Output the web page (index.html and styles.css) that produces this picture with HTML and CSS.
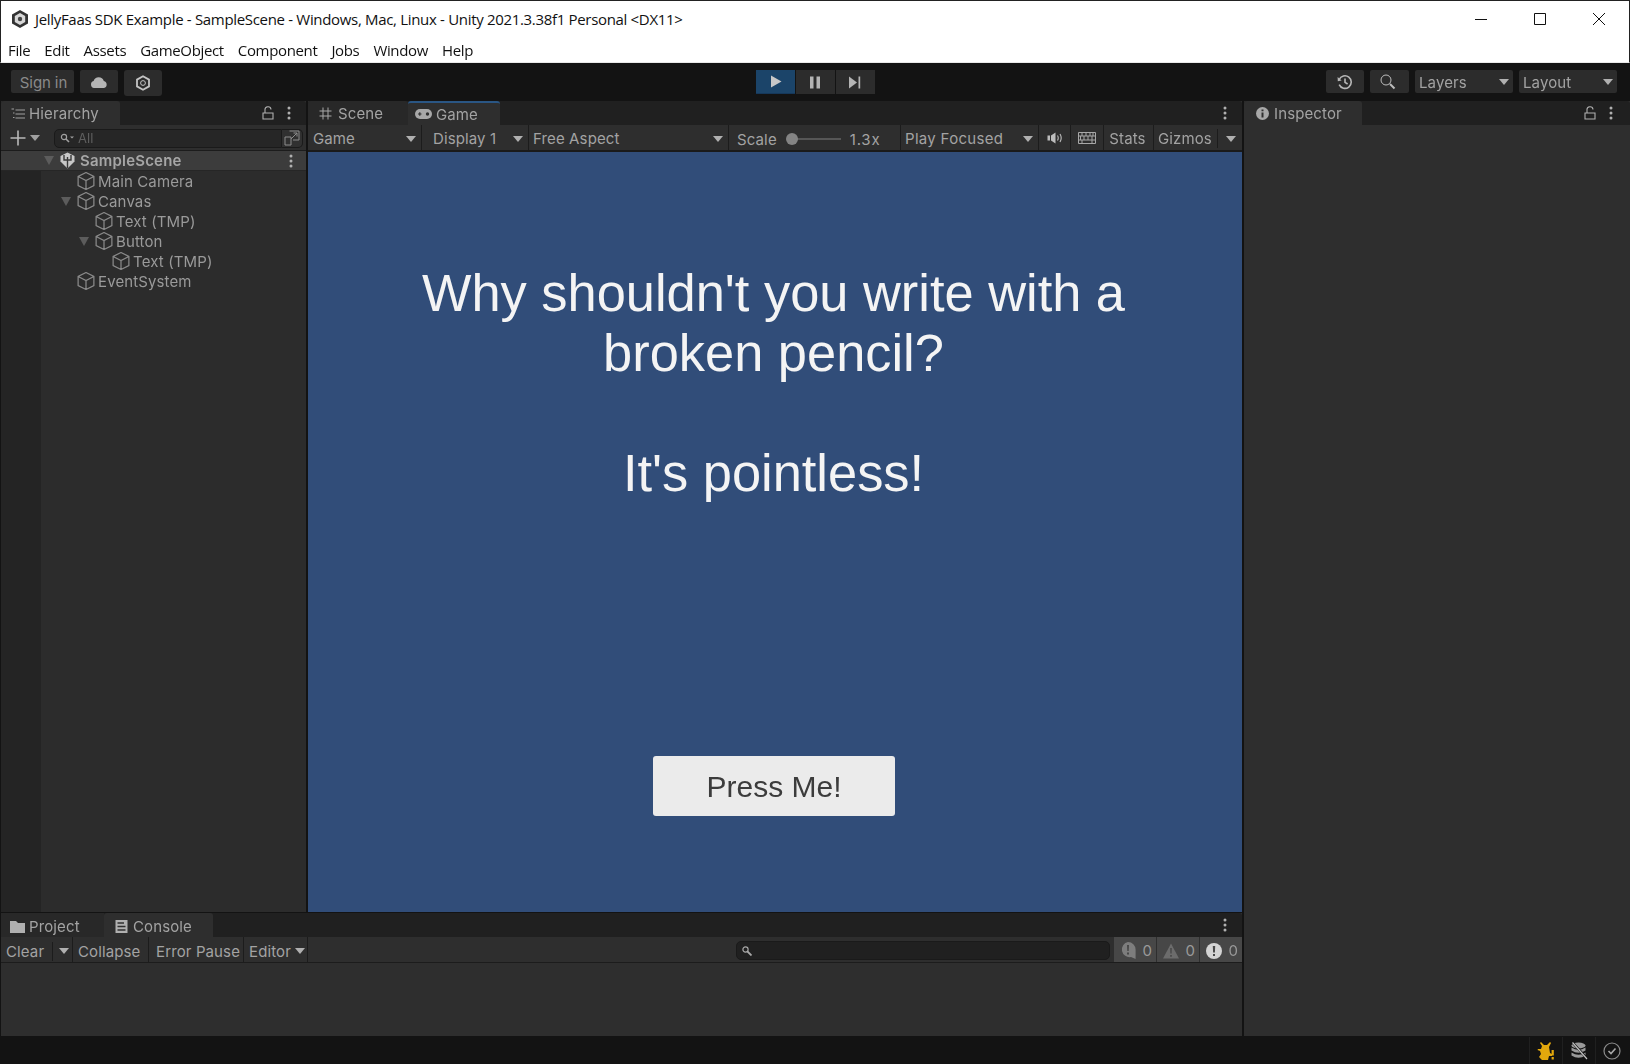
FILE: index.html
```html
<!DOCTYPE html>
<html>
<head>
    <title>JellyFaas SDK Example - SampleScene - Unity</title>
    <link rel="stylesheet" href="styles.css">
</head>
<body>
    <svg class="defs" width="0" height="0">
        <symbol id="cube" viewBox="1 1 16 16">
            <path d="M9 1.5 L16 5 V13 L9 16.5 L2 13 V5 Z M2 5 L9 8.6 L16 5 M9 8.6 V16.5" fill="none" stroke="#8a8a8a" stroke-width="1.1"/>
        </symbol>
        <symbol id="kebab" viewBox="0 0 4 14">
            <circle cx="2" cy="2" r="1.5" fill="#b0b0b0"/><circle cx="2" cy="7" r="1.5" fill="#b0b0b0"/><circle cx="2" cy="12" r="1.5" fill="#b0b0b0"/>
        </symbol>
        <symbol id="lock" viewBox="0 0 12 14">
            <path d="M1 7 H11 V13 H1 Z M3 6.5 V4 A3 3 0 0 1 9 3.5" fill="none" stroke="#b0b0b0" stroke-width="1.1"/>
        </symbol>
    </svg>

    <div class="window-top">
        <div class="titlebar">
            <svg class="app-icon" width="20" height="20" viewBox="0 0 20 20">
                <path d="M10 1 L18 5.5 V14.5 L10 19 L2 14.5 V5.5 Z" fill="#333"/>
                <path d="M10 4 L15.2 7 V13 L10 16 L4.8 13 V7 Z" fill="#d8d8d8"/>
                <circle cx="10" cy="10" r="2.2" fill="#444"/>
            </svg>
            <span class="title">JellyFaas SDK Example - SampleScene - Windows, Mac, Linux - Unity 2021.3.38f1 Personal &lt;DX11&gt;</span>
            <div class="win-buttons">
                <svg width="14" height="14" viewBox="0 0 14 14"><path d="M1 7.5 H13" stroke="#111" stroke-width="1"/></svg>
                <svg width="14" height="14" viewBox="0 0 14 14"><path d="M1.5 1.5 H12.5 V12.5 H1.5 Z" fill="none" stroke="#111" stroke-width="1"/></svg>
                <svg width="14" height="14" viewBox="0 0 14 14"><path d="M1 1 L13 13 M13 1 L1 13" stroke="#111" stroke-width="1"/></svg>
            </div>
        </div>
        <nav class="menubar">
            <span>File</span><span>Edit</span><span>Assets</span><span>GameObject</span><span>Component</span><span>Jobs</span><span>Window</span><span>Help</span>
        </nav>
    </div>

    <div class="maintoolbar">
        <div class="tb-left">
            <div class="tb-btn signin">Sign in</div>
            <div class="tb-btn icon-btn">
                <svg width="18" height="12" viewBox="0 0 18 12"><path d="M4 12 A3.6 3.6 0 0 1 3.6 5 A5.4 5.4 0 0 1 13.8 5 A3.6 3.6 0 0 1 14 12 Z" fill="#b4b4b4"/></svg>
            </div>
            <div class="tb-btn icon-btn tall">
                <svg width="16" height="16" viewBox="0 0 16 16"><path d="M8 1.2 L14 4.6 V11.4 L8 14.8 L2 11.4 V4.6 Z" fill="none" stroke="#c4c4c4" stroke-width="1.8"/><circle cx="8" cy="8" r="2.4" fill="none" stroke="#c4c4c4" stroke-width="1"/></svg>
            </div>
        </div>
        <div class="tb-center">
            <div class="play-btn active"><svg width="12" height="13" viewBox="0 0 12 13"><path d="M1 0.5 L11.5 6.5 L1 12.5 Z" fill="#c8c8c8"/></svg></div>
            <div class="play-btn"><svg width="12" height="13" viewBox="0 0 12 13"><path d="M1 0.5 H4.5 V12.5 H1 Z M7.5 0.5 H11 V12.5 H7.5 Z" fill="#b4b4b4"/></svg></div>
            <div class="play-btn"><svg width="13" height="13" viewBox="0 0 13 13"><path d="M1 0.5 L9 6.5 L1 12.5 Z" fill="#b4b4b4"/><path d="M10.5 0.5 H12.2 V12.5 H10.5 Z" fill="#b4b4b4"/></svg></div>
        </div>
        <div class="tb-right">
            <div class="tb-btn icon-btn">
                <svg width="16" height="16" viewBox="0 0 16 16"><path d="M2.2 5.5 A6.3 6.3 0 1 1 2.2 10.6 M8 4.5 V8.3 L10.6 10" fill="none" stroke="#b8b8b8" stroke-width="1.6"/><path d="M0.6 3 L4.6 6.6 L0.8 7.2 Z" fill="#b8b8b8"/></svg>
            </div>
            <div class="tb-btn icon-btn search-btn">
                <svg width="16" height="16" viewBox="0 0 16 16"><circle cx="6" cy="6" r="5" fill="none" stroke="#bdbdbd" stroke-width="1"/><path d="M10 10 L14.5 14.5" stroke="#bdbdbd" stroke-width="2"/></svg>
            </div>
            <div class="tb-btn drop">Layers<i class="caret"></i></div>
            <div class="tb-btn drop">Layout<i class="caret"></i></div>
        </div>
    </div>

    <div class="workspace">
        <div class="left-col">
            <div class="upper-row">
                <section class="panel hierarchy">
                    <div class="tabstrip">
                        <div class="tab on tab-hierarchy">
                            <svg width="14" height="12" viewBox="0 0 14 12"><path d="M4.5 2 H14 M4.5 6 H14 M4.5 10 H14" stroke="#a0a0a0" stroke-width="1"/><path d="M0.5 1 H3 M2 5 H3.5 M2 9.5 H3.5" stroke="#a0a0a0" stroke-width="1"/></svg>
                            Hierarchy
                        </div>
                        <div class="tab-tools">
                            <svg width="12" height="14"><use href="#lock"/></svg>
                            <svg width="4" height="14"><use href="#kebab"/></svg>
                        </div>
                    </div>
                    <div class="hier-toolbar">
                        <svg class="plus" width="16" height="16" viewBox="0 0 16 16"><path d="M8 0.5 V15.5 M0.5 8 H15.5" stroke="#b8b8b8" stroke-width="1.6"/></svg>
                        <i class="caret plus-caret"></i>
                        <div class="searchbox">
                            <svg width="14" height="10" viewBox="0 0 14 10"><circle cx="4" cy="4" r="2.6" fill="none" stroke="#a0a0a0" stroke-width="1.2"/><path d="M6 6 L9 9" stroke="#a0a0a0" stroke-width="1.6"/><path d="M10 3.5 H14 L12 5.5 Z" fill="#a0a0a0"/></svg>
                            <span>All</span>
                        </div>
                        <div class="picker">
                            <svg width="16" height="16" viewBox="0 0 16 16"><path d="M5.5 1 H15 V10 H9 M1 7 H7 V15 H1 Z M7 9 L13 3 M9.5 3 H13 V6.5" fill="none" stroke="#8c8c8c" stroke-width="1"/></svg>
                        </div>
                    </div>
                    <div class="tree">
                        <div class="gutter"></div>
                        <div class="rows">
                            <div class="row scene-row">
                                <i class="fold fold-0"></i>
                                <svg class="scene-icon" width="17" height="17" viewBox="0 0 17 17"><path d="M8.5 0.5 L15.5 4 V9.5 L8.5 16.5 L1.5 9.5 V4 Z" fill="#c8c8c8"/><path d="M5 3 V8 H12 V3 M8.5 5 V16" fill="none" stroke="#3a3a3a" stroke-width="1.4"/></svg>
                                <b>SampleScene</b>
                                <svg class="row-kebab" width="4" height="14"><use href="#kebab"/></svg>
                            </div>
                            <div class="row indent-1"><svg width="18" height="18"><use href="#cube"/></svg>Main Camera</div>
                            <div class="row indent-1"><i class="fold"></i><svg width="18" height="18"><use href="#cube"/></svg>Canvas</div>
                            <div class="row indent-2"><svg width="18" height="18"><use href="#cube"/></svg>Text (TMP)</div>
                            <div class="row indent-2"><i class="fold"></i><svg width="18" height="18"><use href="#cube"/></svg>Button</div>
                            <div class="row indent-3"><svg width="18" height="18"><use href="#cube"/></svg>Text (TMP)</div>
                            <div class="row indent-1"><svg width="18" height="18"><use href="#cube"/></svg>EventSystem</div>
                        </div>
                    </div>
                </section>

                <section class="panel game">
                    <div class="tabstrip">
                        <div class="tab tab-scene">
                            <svg width="13" height="13" viewBox="0 0 13 13"><path d="M4 0.5 V12.5 M9 0.5 V12.5 M0.5 4 H12.5 M0.5 9 H12.5" stroke="#a8a8a8" stroke-width="1"/></svg>
                            Scene
                        </div>
                        <div class="tab on tab-game">
                            <svg width="17" height="10" viewBox="0 0 17 10"><rect x="0" y="0" width="17" height="10" rx="5" fill="#a8a8a8"/><path d="M3 5 H6.5 M4.8 3.2 V6.8" stroke="#2f2f2f" stroke-width="1.2"/><circle cx="12.5" cy="5" r="1.7" fill="#2f2f2f"/></svg>
                            Game
                        </div>
                        <div class="tab-tools">
                            <svg width="4" height="14"><use href="#kebab"/></svg>
                        </div>
                    </div>
                    <div class="game-toolbar">
                        <div class="gt-item gt-game">Game<i class="caret"></i></div>
                        <div class="gt-item gt-display">Display 1<i class="caret"></i></div>
                        <div class="gt-item gt-aspect">Free Aspect<i class="caret"></i></div>
                        <div class="gt-item gt-scale">
                            Scale
                            <span class="slider"><i class="knob"></i></span>
                            <span class="scale-val">1.3x</span>
                        </div>
                        <div class="gt-item gt-focus">Play Focused<i class="caret"></i></div>
                        <div class="gt-item gt-audio">
                            <svg width="16" height="12" viewBox="0 0 16 12"><path d="M0.5 3.5 H3 V8.5 H0.5 Z M4 3.5 L8.5 0.5 V11.5 L4 8.5 Z" fill="#bdbdbd"/><path d="M10.5 3.5 Q12 6 10.5 8.5 M13 2 Q15.4 6 13 10" fill="none" stroke="#bdbdbd" stroke-width="1.1"/></svg>
                        </div>
                        <div class="gt-item gt-keys">
                            <svg width="18" height="12" viewBox="0 0 18 12"><path d="M0.5 0.5 H17.5 V11.5 H0.5 Z M0.5 4 H17.5 M0.5 8 H17.5 M4 0.5 V4 M8 0.5 V4 M12 0.5 V4 M15 0.5 V4 M2.5 4 V8 M6 4 V8 M10 4 V8 M14 4 V8 M4 8 V11.5 M14 8 V11.5" fill="none" stroke="#a8a8a8" stroke-width="1"/></svg>
                        </div>
                        <div class="gt-item gt-stats">Stats</div>
                        <div class="gt-item gt-gizmos">
                            <span class="gizmo-label">Gizmos</span>
                            <i class="caret"></i>
                        </div>
                    </div>
                    <div class="game-view">
                        <div class="joke">Why shouldn't you write with a<br>broken pencil?<br><br>It's pointless!</div>
                        <div class="press-btn">Press Me!</div>
                    </div>
                </section>
            </div>

            <section class="panel console">
                <div class="tabstrip">
                    <div class="tab tab-project">
                        <svg width="15" height="12" viewBox="0 0 15 12"><path d="M0 0 H6 L8 2 H15 V12 H0 Z" fill="#b0b0b0"/></svg>
                        Project
                    </div>
                    <div class="tab on tab-console">
                        <svg width="13" height="13" viewBox="0 0 13 13"><rect x="0.5" y="0" width="12" height="13" fill="#b0b0b0"/><path d="M2.5 3 H9 M2.5 6.5 H10.5 M2.5 10 H10.5" stroke="#2f2f2f" stroke-width="1.4"/></svg>
                        Console
                    </div>
                    <div class="tab-tools">
                        <svg width="4" height="14"><use href="#kebab"/></svg>
                    </div>
                </div>
                <div class="console-toolbar">
                    <div class="ct-item ct-clear"><span class="clear-label">Clear</span><i class="caret"></i></div>
                    <div class="ct-item ct-collapse">Collapse</div>
                    <div class="ct-item ct-pause">Error Pause</div>
                    <div class="ct-item ct-editor">Editor<i class="caret"></i></div>
                    <div class="console-search">
                        <svg width="10" height="10" viewBox="0 0 10 10"><circle cx="3.5" cy="3.5" r="2.6" fill="none" stroke="#a8a8a8" stroke-width="1.2"/><path d="M5.5 5.5 L9.5 9.5" stroke="#a8a8a8" stroke-width="1.8"/></svg>
                    </div>
                    <div class="count">
                        <svg width="16" height="17" viewBox="0 0 16 17"><path d="M8 0 A7.6 7.6 0 0 1 15.6 7.6 V17 L11 15 A7.6 7.6 0 1 1 8 0 Z" fill="#7d7d7d"/><path d="M7 3 H9 L8.7 9 H7.3 Z M7 10.5 H9 V12.5 H7 Z" fill="#474747"/></svg>
                        <span>0</span>
                    </div>
                    <div class="count">
                        <svg width="16" height="16" viewBox="0 0 16 16"><path d="M8 0.5 L16 15.5 H0 Z" fill="#6c6c6c"/><path d="M7.2 5 H8.8 L8.6 10.5 H7.4 Z M7.2 12 H8.8 V13.8 H7.2 Z" fill="#474747"/></svg>
                        <span>0</span>
                    </div>
                    <div class="count">
                        <svg width="16" height="16" viewBox="0 0 16 16"><circle cx="8" cy="8" r="8" fill="#d4d4d4"/><path d="M6.8 3 H9.2 L8.9 9.5 H7.1 Z M7 11 H9 V13 H7 Z" fill="#474747"/></svg>
                        <span>0</span>
                    </div>
                </div>
                <div class="console-body"></div>
            </section>
        </div>

        <section class="panel inspector">
            <div class="tabstrip">
                <div class="tab on tab-inspector">
                    <svg width="13" height="13" viewBox="0 0 13 13"><circle cx="6.5" cy="6.5" r="6.5" fill="#a8a8a8"/><path d="M5.5 2.5 H7.5 V4.3 H5.5 Z M5.5 5.5 H7.5 V10.5 H5.5 Z" fill="#303030"/></svg>
                    Inspector
                </div>
                <div class="tab-tools">
                    <svg width="12" height="14"><use href="#lock"/></svg>
                    <svg width="4" height="14"><use href="#kebab"/></svg>
                </div>
            </div>
            <div class="inspector-body"></div>
        </section>
    </div>

    <footer class="statusbar">
        <div class="status-cell">
            <svg width="18" height="20" viewBox="0 0 18 20"><path d="M4 1 L7 4 H10 L13 1 L14 2 L12 6 L13 12 L15 13 V15 H12 L11 19 H5 L2 16 L4 13 L3 10 L0.5 9 L1 8 L4 8 L5 5 L3 2 Z" fill="#e3a80c"/><path d="M14.6 9 H16.8 V14.6 H14.6 Z M14.6 16 H16.8 V18.4 H14.6 Z" fill="#e3a80c"/></svg>
        </div>
        <div class="status-cell">
            <svg width="18" height="18" viewBox="0 0 18 18"><ellipse cx="8.5" cy="3.5" rx="7" ry="3" fill="#9a9a9a"/><path d="M1.5 5.5 Q8.5 10 15.5 5.5 V8.5 Q8.5 13 1.5 8.5 Z M1.5 10.5 Q8.5 15 15.5 10.5 V13.5 Q8.5 18 1.5 13.5 Z" fill="#9a9a9a"/><path d="M3 1 L17 16.5" stroke="#131313" stroke-width="2.6"/><path d="M2.5 0.5 L17 17" stroke="#c4c4c4" stroke-width="1.2"/></svg>
        </div>
        <div class="status-cell last">
            <svg width="18" height="18" viewBox="0 0 18 18"><circle cx="9" cy="9" r="8" fill="none" stroke="#8c8c8c" stroke-width="1.2"/><path d="M5.5 9 L8 11.5 L12.5 6.5" fill="none" stroke="#a8a8a8" stroke-width="1.6"/></svg>
        </div>
    </footer>
</body>
</html>
```

FILE: styles.css
```css
* {
    box-sizing: border-box;
}
html, body {
    margin: 0;
    padding: 0;
}
body {
    width: 1630px;
    height: 1064px;
    overflow: hidden;
    background-color: #131313;
    color: #a3a3a3;
    font-family: Inter, "Liberation Sans", sans-serif;
    font-size: 15px;
    letter-spacing: 0.12px;
    display: flex;
    flex-direction: column;
    filter: blur(0.35px); /* the shot is a soft upscale */
}
.defs {
    display: none;
}
svg {
    flex: none;
    display: block;
}

/* window chrome */
.window-top {
    height: 63px;
    flex: none;
    background-color: #fff;
    border: 1px solid #222;
    border-bottom: 1px solid #e9e9e9;
    color: #111;
    font-family: "Open Sans", "Noto Sans", sans-serif;
}
.titlebar {
    height: 35px;
    display: flex;
    align-items: center;
    padding-left: 9px;
}
.title {
    margin-left: 5px;
    font-size: 15px;
    letter-spacing: -0.32px;
    white-space: nowrap;
}
.win-buttons {
    margin-left: auto;
    display: flex;
    gap: 45px;
    padding-right: 23px;
}
.menubar {
    display: flex;
    gap: 14px;
    padding: 2px 0 0 7px;
    font-size: 15px;
    letter-spacing: -0.35px;
    height: 26px;
    align-items: center;
}

/* main toolbar */
.maintoolbar {
    height: 38px;
    flex: none;
    display: flex;
    align-items: flex-start;
    justify-content: space-between;
    padding: 7px 13px 0 11px;
    position: relative;
}
.tb-left, .tb-right, .tb-center {
    display: flex;
    gap: 6px;
}
.tb-center {
    position: absolute;
    left: 756px;
    top: 7px;
    gap: 1px;
}
.tb-btn {
    height: 23px;
    background-color: #2c2c2c;
    border-radius: 2px;
    display: flex;
    align-items: center;
    padding-top: 1px;
}
.signin {
    width: 63px;
    justify-content: center;
    color: #8a8a8a;
    letter-spacing: -0.1px;
    padding-left: 2px;
}
.icon-btn {
    width: 38px;
    justify-content: center;
    padding-top: 0;
}
.tall {
    height: 26px;
    border-radius: 3px;
}
.search-btn {
    width: 39px;
    padding-right: 3px;
}
.drop {
    width: 98px;
    padding: 1px 4px 0;
    justify-content: space-between;
}
.play-btn {
    width: 39px;
    height: 24px;
    background-color: #2c2c2c;
    display: flex;
    align-items: center;
    justify-content: center;
    padding-right: 2px;
}
.play-btn.active {
    background-color: #1b4469;
    border-bottom: 1px solid #16385a;
    padding-right: 0;
}
.caret {
    display: inline-block;
    width: 0;
    height: 0;
    flex: none;
    border-left: 5px solid transparent;
    border-right: 5px solid transparent;
    border-top: 6px solid #b0b0b0;
}

/* docked layout */
.workspace {
    flex: 1;
    min-height: 0;
    display: flex;
    gap: 2px;
    padding-left: 1px;
}
.left-col {
    width: 1241px;
    flex: none;
    display: flex;
    flex-direction: column;
    gap: 1px;
}
.upper-row {
    height: 811px;
    display: flex;
    gap: 2px;
}
.panel {
    display: flex;
    flex-direction: column;
    background-color: #2e2e2e;
}
.tabstrip {
    height: 24px;
    flex: none;
    display: flex;
    background-color: #202020;
    border-radius: 3px 3px 0 0;
}
.tab {
    height: 24px;
    display: flex;
    align-items: center;
    gap: 4px;
    padding-top: 1px;
    color: #a3a3a3;
}
.tab.on {
    background-color: #2e2e2e;
    border-radius: 3px 3px 0 0;
}
.tab-tools {
    margin-left: auto;
    display: flex;
    align-items: center;
    gap: 13px;
    padding-right: 15px;
}

/* hierarchy */
.hierarchy {
    width: 305px;
    flex: none;
}
.tab-hierarchy {
    width: 119px;
    padding-left: 10px;
}
.hier-toolbar {
    height: 26px;
    flex: none;
    display: flex;
    align-items: center;
    background-color: #2e2e2e;
    border-bottom: 1px solid #1c1c1c;
    padding: 1px 0 0 9px;
}
.plus-caret {
    margin-left: 4px;
    border-top-color: #a0a0a0;
}
.searchbox {
    margin-left: 14px;
    width: 228px;
    height: 19px;
    background-color: #262626;
    border: 1px solid #1a1a1a;
    border-radius: 5px 0 0 5px;
    display: flex;
    align-items: center;
    gap: 4px;
    padding-left: 5px;
    font-size: 13px;
    color: #5e5e5e;
}
.picker {
    width: 21px;
    height: 19px;
    background-color: #303030;
    border: 1px solid #1a1a1a;
    border-left: none;
    border-radius: 0 5px 5px 0;
    display: flex;
    align-items: center;
    justify-content: center;
}
.tree {
    flex: 1;
    display: flex;
    background-color: #2c2c2c;
}
.gutter {
    width: 40px;
    flex: none;
    background-color: #242424;
}
.rows {
    flex: 1;
    position: relative;
}
.row {
    height: 20px;
    display: flex;
    align-items: center;
    gap: 3px;
    position: relative;
    color: #9a9a9a;
}
.scene-row {
    height: 20px;
    margin-left: -40px;
    padding-left: 43px;
    gap: 4px;
    background-color: #3c3c3c;
    border-bottom: 1px solid #262626;
    color: #a6a6a6;
}
.scene-row b {
    font-weight: 600;
    font-size: 15px;
    letter-spacing: 0.2px;
}
.row-kebab {
    margin-left: auto;
    margin-right: 13px;
}
.indent-1 {
    padding-left: 36px;
}
.indent-2 {
    padding-left: 54px;
}
.indent-3 {
    padding-left: 71px;
}
.fold {
    position: absolute;
    width: 0;
    height: 0;
    margin-left: -16px;
    border-left: 5.5px solid transparent;
    border-right: 5.5px solid transparent;
    border-top: 9px solid #5c5c5c;
}
.fold-0 {
    position: static;
    margin: 0 1px 0 0;
}

/* game view */
.game {
    flex: 1;
}
.tab-scene {
    width: 100px;
    padding-left: 11px;
    gap: 6px;
    background-color: #282828;
    border-radius: 3px 3px 0 0;
}
.tab-game {
    width: 92px;
    padding: 0 0 0 7px;
    gap: 4px;
    border-top: 2px solid #2a5684;
}
.game-toolbar {
    height: 27px;
    flex: none;
    display: flex;
    background-color: #2e2e2e;
    border-bottom: 2px solid #1a1a1a;
}
.gt-item {
    height: 25px;
    display: flex;
    align-items: center;
    justify-content: space-between;
    border-right: 1px solid #1c1c1c;
    padding: 2px 5px 0 5px;
    color: #a3a3a3;
}
.gt-game {
    width: 114px;
}
.gt-display {
    width: 107px;
    padding-left: 11px;
    padding-right: 5px;
}
.gt-aspect {
    width: 200px;
    padding-left: 4px;
}
.gt-scale {
    width: 172px;
    justify-content: flex-start;
    padding: 3px 0 0 8px;
}
.slider {
    width: 54px;
    height: 2px;
    margin-left: 10px;
    background-color: #565656;
    position: relative;
}
.knob {
    position: absolute;
    left: -1px;
    top: -5px;
    width: 12px;
    height: 12px;
    border-radius: 50%;
    background-color: #848484;
}
.scale-val {
    margin-left: 9px;
    letter-spacing: 0.8px;
}
.gt-focus {
    width: 138px;
    padding-left: 4px;
    letter-spacing: 0.3px;
}
.gt-audio {
    width: 32px;
    justify-content: center;
    padding: 0;
}
.gt-keys {
    width: 33px;
    justify-content: center;
    padding: 0;
}
.gt-stats {
    width: 50px;
    justify-content: center;
    padding: 2px 2px 0 0;
}
.gt-gizmos {
    flex: 1;
    border-right: none;
    padding: 2px 6px 0 4px;
}
.gizmo-label {
    padding-right: 5px;
    border-right: 1px solid #1c1c1c;
}
.game-view {
    flex: 1;
    background-color: #314d79;
    display: flex;
    flex-direction: column;
    align-items: center;
    padding-top: 111px;
}
.joke {
    width: 100%;
    padding-right: 3px;
    text-align: center;
    color: #f4f4f4;
    font-family: "Liberation Sans", Arial, sans-serif;
    font-size: 52.4px;
    line-height: 60px;
    letter-spacing: 0;
}
.press-btn {
    margin-top: 253px;
    width: 242px;
    height: 60px;
    margin-right: 2px;
    padding-top: 1px;
    background-color: #ebebeb;
    border-radius: 3px;
    color: #3c3c3c;
    font-family: "Liberation Sans", Arial, sans-serif;
    font-size: 30px;
    letter-spacing: 0;
    display: flex;
    align-items: center;
    justify-content: center;
}

/* console */
.console {
    flex: 1;
}
.console .tab {
    padding-top: 3px;
}
.tab-project {
    width: 103px;
    padding-left: 9px;
    background-color: #282828;
}
.tab-console {
    width: 109px;
    padding-left: 11px;
    gap: 5px;
}
.console-toolbar {
    height: 26px;
    flex: none;
    display: flex;
    align-items: stretch;
    background-color: #2e2e2e;
    border-bottom: 1px solid #1c1c1c;
}
.ct-item {
    display: flex;
    align-items: center;
    border-right: 1px solid #1c1c1c;
    color: #a3a3a3;
    padding: 3px 0 0 5px;
}
.ct-clear {
    width: 72px;
}
.clear-label {
    width: 47px;
    border-right: 1px solid #1c1c1c;
    margin-right: 6px;
}
.ct-collapse {
    width: 76px;
    padding-left: 5px;
}
.ct-pause {
    width: 95px;
    padding-left: 7px;
}
.ct-editor {
    width: 64px;
    padding-left: 5px;
    gap: 4px;
}
.console-search {
    margin: 4px 0 2px 428px;
    width: 374px;
    background-color: #202020;
    border: 1px solid #1a1a1a;
    border-radius: 5px;
    display: flex;
    align-items: center;
    padding-left: 5px;
}
.count {
    margin-left: 1px;
    width: 42px;
    background-color: #474747;
    display: flex;
    align-items: center;
    justify-content: space-between;
    padding: 2px 4px 0 6px;
    color: #9a9a9a;
}
.console-search + .count {
    margin-left: 4px;
}
.console-body {
    flex: 1;
}

/* inspector */
.inspector {
    flex: 1;
}
.inspector .tab-tools {
    padding-right: 17px;
}
.tab-inspector {
    width: 118px;
    padding-left: 12px;
    gap: 5px;
}
.inspector-body {
    flex: 1;
}

/* status bar */
.statusbar {
    height: 28px;
    flex: none;
    display: flex;
    justify-content: flex-end;
    padding: 1px 2px 0 0;
}
.status-cell {
    width: 33px;
    display: flex;
    align-items: center;
    justify-content: center;
    border-left: 1px solid #202020;
}
```
